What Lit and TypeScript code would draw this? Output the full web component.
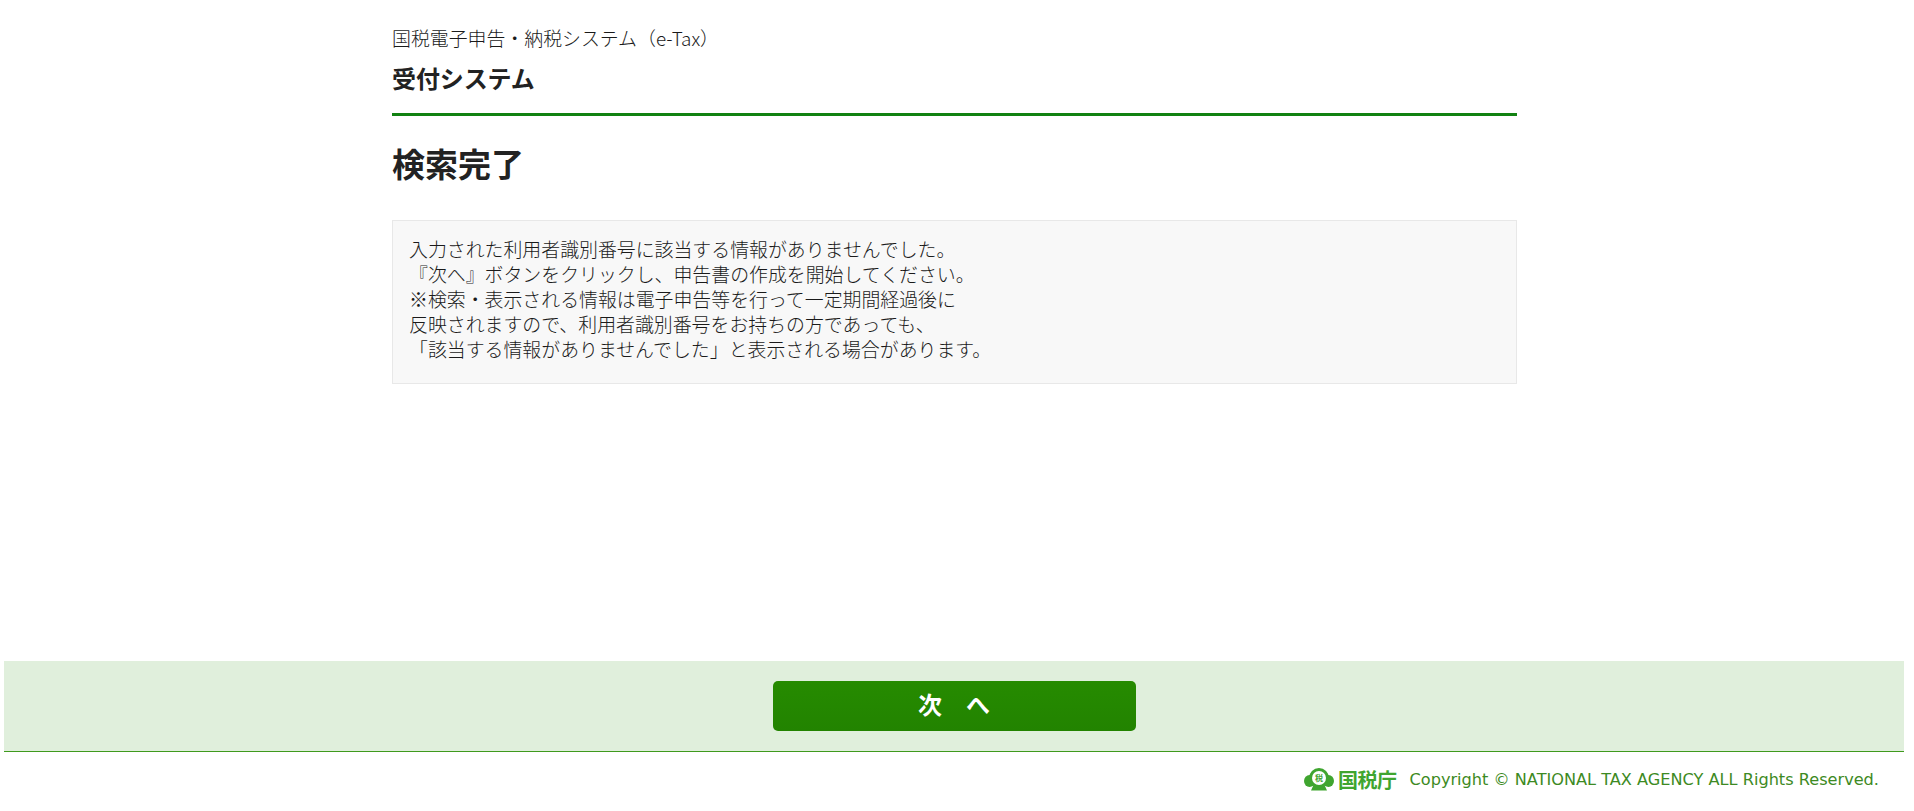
import { LitElement, html, css } from "lit";
import { customElement } from "lit/decorators.js";

@customElement("app-root")
export class AppRoot extends LitElement {
  static styles = css`
    :host {
      display: flex;
      flex-direction: column;
      height: 811px;
      box-sizing: border-box;
      padding: 0 10px 0 4px;
      font-family: "Noto Sans CJK JP", "Liberation Sans", sans-serif;
      font-weight: 300;
      color: #1a1a1a;
      background: #fff;
      overflow: hidden;
    }
    .main {
      width: 1125px;
      margin: 0 0 0 388px;
      flex: 1;
    }
    .head {
      border-bottom: 3px solid #128212;
      height: 116px;
      box-sizing: border-box;
      padding-top: 24px;
    }
    .sys {
      font-size: 18.9px;
      line-height: 28px;
    }
    .sub {
      font-size: 24px;
      font-weight: 700;
      line-height: 36px;
      margin-top: 8px;
      letter-spacing: -0.1px;
      color: #222;
    }
    h1 {
      margin: 25px 0 0;
      font-size: 33px;
      font-weight: 700;
      line-height: 44px;
      color: #222;
    }
    .msg {
      margin-top: 35px;
      border: 1px solid #e8e8e8;
      background: #f8f8f8;
      padding: 15px 16px 0;
      font-size: 18.9px;
      line-height: 25px;
      height: 164px;
      box-sizing: border-box;
    }
    .bar {
      height: 91px;
      box-sizing: border-box;
      background: #e0efdc;
      border-bottom: 1px solid #3f9a1e;
      display: flex;
      justify-content: center;
      padding-top: 20px;
    }
    .next {
      width: 363px;
      height: 50px;
      border: 0;
      border-radius: 5px;
      background: linear-gradient(#268b00, #228300);
      color: #fff;
      font: 700 24px/30px "Noto Sans CJK JP", sans-serif;
      padding: 0 0 4px;
    }
    .foot {
      height: 59px;
      box-sizing: border-box;
      display: flex;
      align-items: center;
      justify-content: flex-end;
      gap: 13px;
      padding: 0 25px 5px 0;
      color: #3d8a23;
    }
    .logo {
      display: flex;
      align-items: center;
      gap: 4px;
      color: #3fa52f;
      font-size: 20px;
      font-weight: 700;
      letter-spacing: -0.5px;
    }
    .mark-text {
      font-size: 8px;
      font-weight: 700;
      letter-spacing: 0;
    }
    .copy {
      font: 16.15px "DejaVu Sans", sans-serif;
    }
  `;

  render() {
    return html`
      <div class="main">
        <header class="head">
          <div class="sys">国税電子申告・納税システム（e-Tax）</div>
          <div class="sub">受付システム</div>
        </header>
        <h1>検索完了</h1>
        <div class="msg">
          入力された利用者識別番号に該当する情報がありませんでした。<br />
          『次へ』ボタンをクリックし、申告書の作成を開始してください。<br />
          ※検索・表示される情報は電子申告等を行って一定期間経過後に<br />
          反映されますので、利用者識別番号をお持ちの方であっても、<br />
          「該当する情報がありませんでした」と表示される場合があります。
        </div>
      </div>
      <div class="bar"><button class="next">次　へ</button></div>
      <footer class="foot">
        <div class="logo">
          <svg width="30" height="23" viewBox="0 0 30 23">
            <g fill="#3fa52f">
              <circle cx="15" cy="10" r="10"/>
              <ellipse cx="5.5" cy="13" rx="5.5" ry="6"/>
              <ellipse cx="24.5" cy="13" rx="5.5" ry="6"/>
              <path d="M9 18h12l2 4.5H7z"/>
            </g>
            <circle cx="15" cy="10" r="7" fill="#fff"/>
            <text class="mark-text" x="15" y="13" text-anchor="middle" fill="#3fa52f">税</text>
          </svg>
          <span>国税庁</span>
        </div>
        <div class="copy">Copyright © NATIONAL TAX AGENCY ALL Rights Reserved.</div>
      </footer>
    `;
  }
}
